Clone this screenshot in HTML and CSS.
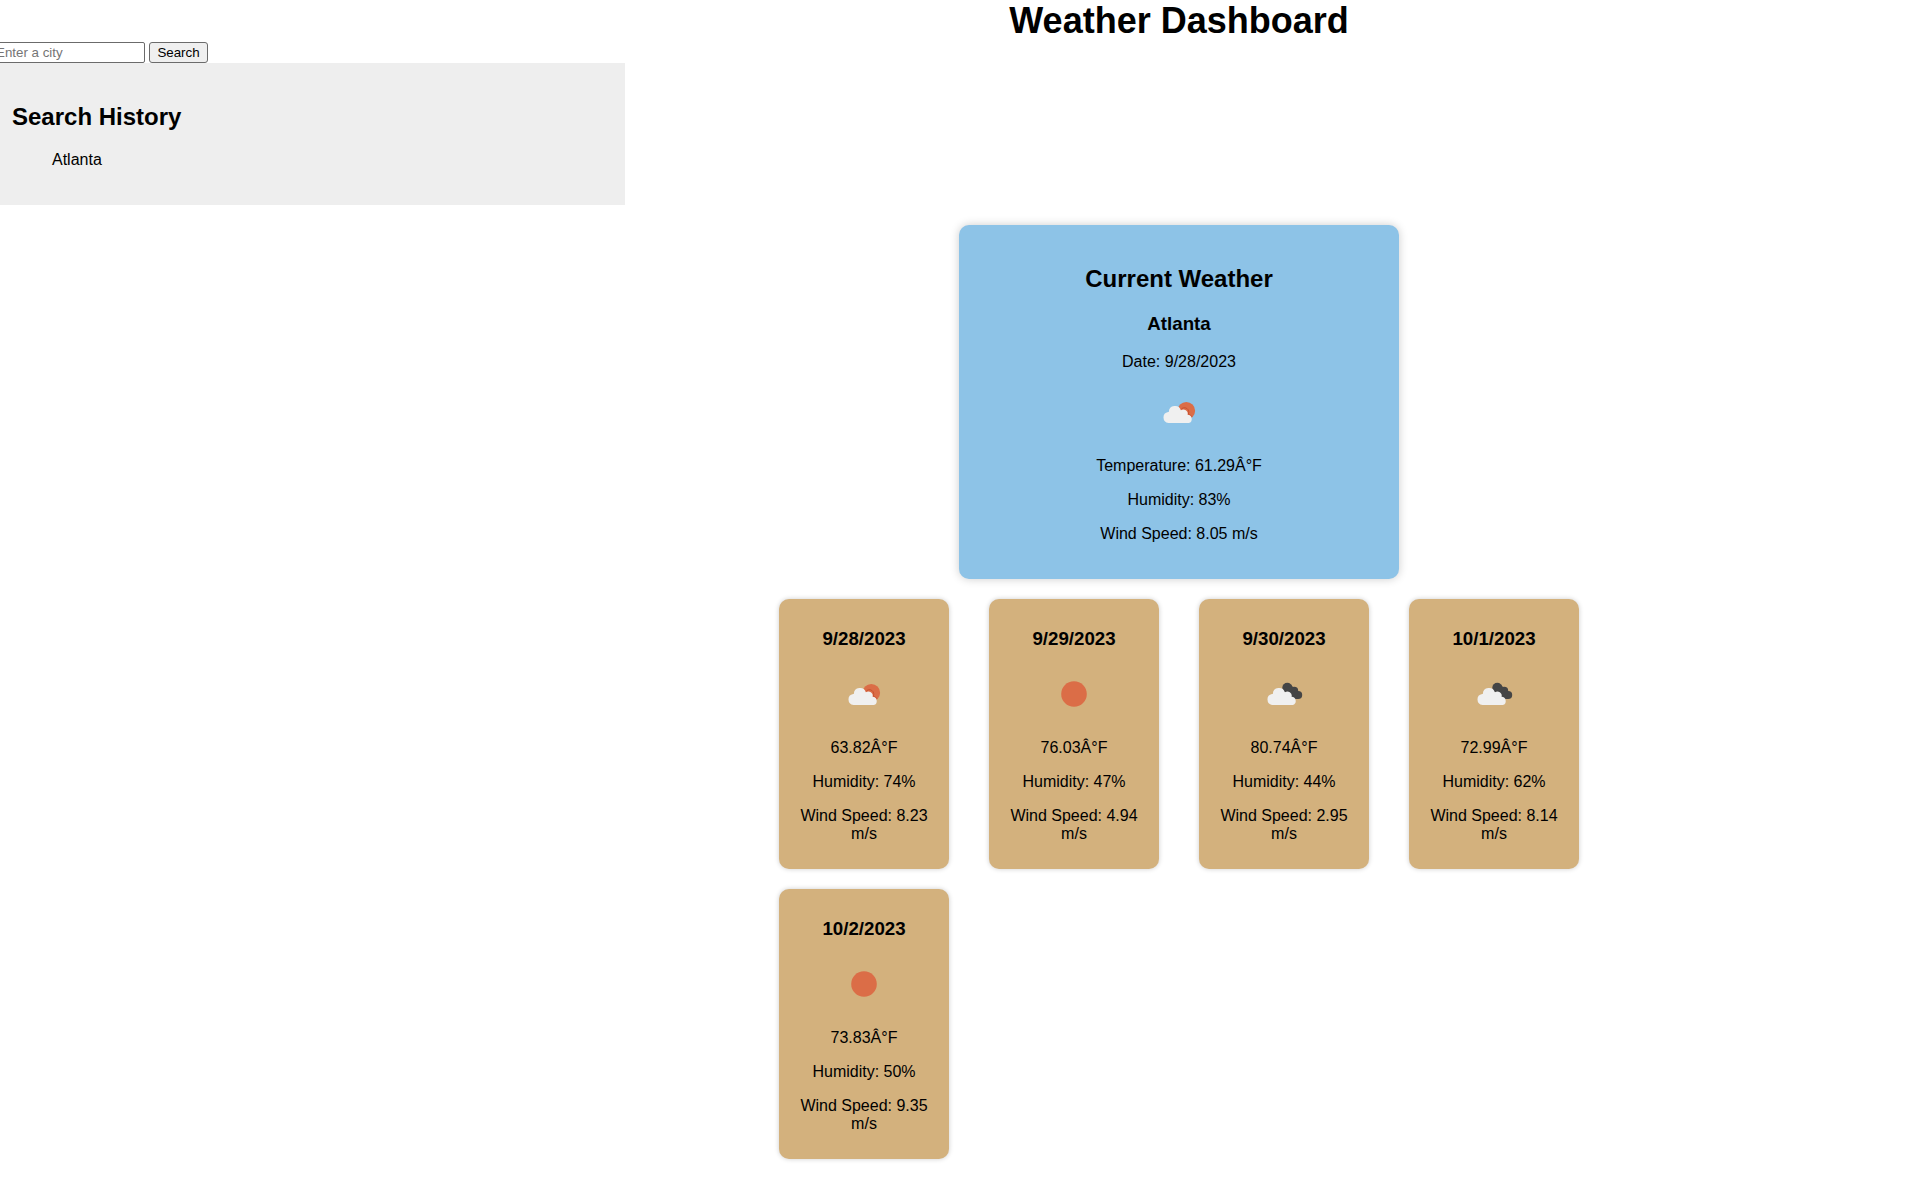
FILE: index.html
```html
<!DOCTYPE html>
<html lang="en">
<head>
<meta charset="utf-8">
<title>Weather Dashboard</title>
<link rel="stylesheet" href="styles.css">
</head>
<body>
<svg class="sprite" aria-hidden="true">
  <symbol id="cloud" viewBox="0 0 50 50">
    <path fill="#f0f0f0" d="M14.500 36a5.600 5.600 0 0 1-.300-11.100h.600a6.200 6.200 0 0 1 12.100-1.600a4.300 4.300 0 0 1 6.700 4.500a4.200 4.200 0 0 1 1.200 8.200z"/>
  </symbol>
  <symbol id="few-clouds" viewBox="0 0 50 50">
    <circle cx="32.300" cy="23.700" r="8.800" fill="#db6d47"/>
    <path fill="none" stroke="#c8502f" stroke-width="1" d="M26.800 22.600a4.300 4.300 0 0 1 7.200 4.900a4.200 4.200 0 0 1 4 2.400"/>
    <use href="#cloud"/>
  </symbol>
  <symbol id="broken-clouds" viewBox="0 0 50 50">
    <g fill="#454545">
      <circle cx="28.300" cy="18.800" r="5"/>
      <circle cx="35.200" cy="21.800" r="4"/>
      <circle cx="39.200" cy="26" r="4"/>
      <path d="M24 19l8-3 6 6 1 8h-5l-10-8z"/>
    </g>
    <use href="#cloud" x="-1"/>
  </symbol>
  <symbol id="clear" viewBox="0 0 50 50">
    <circle cx="25" cy="25" r="12.800" fill="#db6d47"/>
  </symbol>
</svg>

<div class="dashboard">
  <h1 class="title">Weather Dashboard</h1>

  <form class="search">
    <input class="search-input" type="text" placeholder="Enter a city" aria-label="City">
    <button class="search-button" type="button">Search</button>
  </form>

  <aside class="history">
    <h2>Search History</h2>
    <ul class="history-list">
      <li>Atlanta</li>
    </ul>
  </aside>

  <main class="weather">
    <section class="current">
      <h2>Current Weather</h2>
      <h3>Atlanta</h3>
      <p>Date: 9/28/2023</p>
      <svg class="icon" role="img" aria-label="Few clouds"><use href="#few-clouds"/></svg>
      <p>Temperature: 61.29Â°F</p>
      <p>Humidity: 83%</p>
      <p>Wind Speed: 8.05 m/s</p>
    </section>

    <section class="forecast">
      <article class="day">
        <h3>9/28/2023</h3>
        <svg class="icon" role="img" aria-label="Few clouds"><use href="#few-clouds"/></svg>
        <p>63.82Â°F</p>
        <p>Humidity: 74%</p>
        <p>Wind Speed: 8.23 m/s</p>
      </article>
      <article class="day">
        <h3>9/29/2023</h3>
        <svg class="icon" role="img" aria-label="Clear sky"><use href="#clear"/></svg>
        <p>76.03Â°F</p>
        <p>Humidity: 47%</p>
        <p>Wind Speed: 4.94 m/s</p>
      </article>
      <article class="day">
        <h3>9/30/2023</h3>
        <svg class="icon" role="img" aria-label="Broken clouds"><use href="#broken-clouds"/></svg>
        <p>80.74Â°F</p>
        <p>Humidity: 44%</p>
        <p>Wind Speed: 2.95 m/s</p>
      </article>
      <article class="day">
        <h3>10/1/2023</h3>
        <svg class="icon" role="img" aria-label="Broken clouds"><use href="#broken-clouds"/></svg>
        <p>72.99Â°F</p>
        <p>Humidity: 62%</p>
        <p>Wind Speed: 8.14 m/s</p>
      </article>
      <article class="day">
        <h3>10/2/2023</h3>
        <svg class="icon" role="img" aria-label="Clear sky"><use href="#clear"/></svg>
        <p>73.83Â°F</p>
        <p>Humidity: 50%</p>
        <p>Wind Speed: 9.35 m/s</p>
      </article>
    </section>
  </main>
</div>
</body>
</html>
```
FILE: styles.css
```css
* {
  box-sizing: border-box;
}

body {
  margin: 0;
  background: #fff;
  color: #000;
  font-family: "Liberation Sans", Arial, sans-serif;
  font-size: 16px;
  line-height: 18px;
}

h2 {
  margin: 20px 0;
  font-size: 24px;
  line-height: 28px;
}

h3 {
  margin: 19px 0;
  line-height: 21px;
}

p {
  margin: 16px 0;
}

.sprite {
  display: none;
}

.dashboard {
  display: grid;
  grid-template-columns: 33.1% 57.9%;
  margin-left: -8px;
}

.title {
  grid-column: 2;
  margin: 0;
  font-size: 36px;
  line-height: 42px;
  text-align: center;
}

.search {
  grid-area: 2 / 1;
  display: flex;
  gap: 4px;
}

.search-input,
.search-button {
  height: 21px;
  border: 1px solid #6b6b6b;
  font-family: inherit;
}

.search-input {
  width: 153px;
  padding: 1px 3px;
  border-radius: 2px;
  background: #fff;
}

.search-input::placeholder {
  color: #757575;
}

.search-button {
  width: 59px;
  padding: 1px 7px;
  border-radius: 3px;
  background: #efefef;
  color: #000;
}

.history {
  grid-area: 3 / 1;
  padding: 20px;
  background: #eee;
}

.history-list {
  margin: 0 0 16px;
  padding-left: 40px;
  list-style: none;
}

.weather {
  grid-area: 4 / 2;
  display: flex;
  flex-direction: column;
  align-items: center;
  gap: 20px;
  padding: 20px 0;
}

.current,
.day {
  border-radius: 10px;
  text-align: center;
}

.current {
  width: 440px;
  padding: 20px;
  background: #8dc3e7;
  box-shadow: 0 0 10px rgba(0, 0, 0, 0.2);
}

.forecast {
  display: grid;
  grid-template-columns: repeat(4, 170px);
  gap: 20px 40px;
}

.day {
  padding: 10px;
  background: #d3b17d;
  box-shadow: 0 0 5px rgba(0, 0, 0, 0.2);
}

.day h3 {
  line-height: 22px;
}

.icon {
  display: block;
  width: 50px;
  height: 50px;
  margin: 0 auto 20px;
}
```
